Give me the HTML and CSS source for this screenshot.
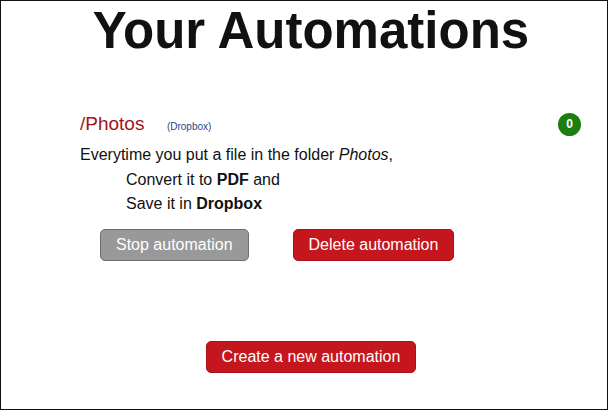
FILE: index.html
```html
<!DOCTYPE html>
<html lang="en">
<head>
    <meta charset="UTF-8">
    <meta name="viewport" content="width=device-width, initial-scale=1.0">
    <title>Your Automations</title>
    <link rel="stylesheet" href="styles.css">
</head>
<body>
    <div class="page">
        <h1 class="head">Your Automations</h1>

        <div class="automation">
            <div class="auto-top">
                <div class="auto-title">
                    <span class="folder">/Photos</span>
                    <span class="service">(Dropbox)</span>
                </div>
                <span class="badge">0</span>
            </div>
            <p class="line first">Everytime you put a file in the folder <em>Photos</em>,</p>
            <p class="line step">Convert it to <b>PDF</b> and</p>
            <p class="line step">Save it in <b>Dropbox</b></p>
            <div class="btns">
                <button class="btn btn-stop">Stop automation</button>
                <button class="btn btn-red">Delete automation</button>
            </div>
        </div>

        <div class="create">
            <button class="btn btn-red">Create a new automation</button>
        </div>
    </div>
</body>
</html>
```

FILE: styles.css
```css
* {
    box-sizing: border-box;
}

body {
    margin: 0;
    font-family: 'Liberation Sans', Arial, sans-serif;
    background-color: #fff;
    color: #111;
}

.page {
    width: 608px;
    height: 410px;
    border: 1px solid #111;
    padding-left: 14px;
}

.head {
    margin: 0;
    font-size: 51px;
    font-weight: bold;
    text-align: center;
    line-height: 60px;
}

.automation {
    margin-top: 50px;
    padding: 0 26px 0 65px;
}

.auto-top {
    display: flex;
    justify-content: space-between;
    align-items: center;
    height: 26px;
}

.folder {
    font-size: 19px;
    color: #a3121a;
}

.service {
    font-size: 10px;
    color: #2a4785;
    margin-left: 18px;
}

.badge {
    width: 23px;
    height: 23px;
    border-radius: 50%;
    background-color: #1b7f10;
    color: #fff;
    font-size: 12px;
    font-weight: bold;
    display: flex;
    align-items: center;
    justify-content: center;
}

.line {
    margin: 0;
    font-size: 16px;
    line-height: 24.5px;
}

.first {
    margin-top: 6px;
}

.step {
    padding-left: 46px;
}

.btns {
    display: flex;
    gap: 44px;
    padding-left: 20px;
    margin-top: 12px;
}

.btn {
    font-family: 'Liberation Sans', Arial, sans-serif;
    font-size: 16px;
    line-height: 18px;
    padding: 6px 15px;
    color: #fff;
    border-radius: 5px;
    cursor: pointer;
}

.btn-stop {
    background-color: #999;
    border: 1px solid #6e6e6e;
}

.btn-red {
    background-color: #c4161c;
    border: 1px solid #a8141a;
}

.create {
    margin-top: 80px;
    text-align: center;
}
```
